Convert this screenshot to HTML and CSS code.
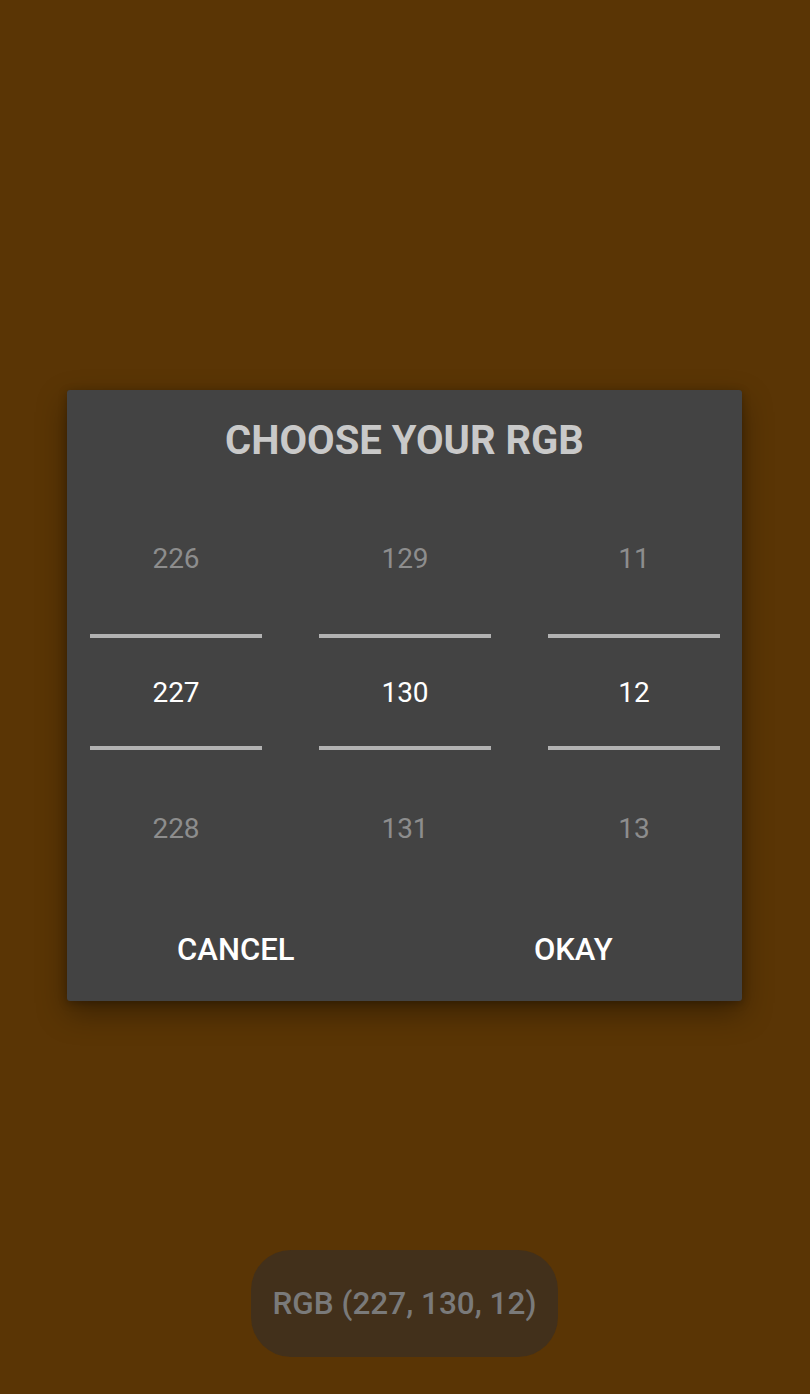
FILE: index.html
```html
<!DOCTYPE html>
<html>
<head>
<meta charset="utf-8">
<link rel="stylesheet" href="styles.css">
</head>
<body>
<div class="screen">
  <div class="dialog">
    <div class="title">CHOOSE YOUR RGB</div>
    <div class="pickers">
      <div class="picker">
        <div class="cell top">226</div>
        <div class="line"></div>
        <div class="cell mid">227</div>
        <div class="line"></div>
        <div class="cell bot">228</div>
      </div>
      <div class="picker">
        <div class="cell top">129</div>
        <div class="line"></div>
        <div class="cell mid">130</div>
        <div class="line"></div>
        <div class="cell bot">131</div>
      </div>
      <div class="picker">
        <div class="cell top">11</div>
        <div class="line"></div>
        <div class="cell mid">12</div>
        <div class="line"></div>
        <div class="cell bot">13</div>
      </div>
    </div>
    <div class="buttons">
      <div class="btn">CANCEL</div>
      <div class="btn">OKAY</div>
    </div>
  </div>
  <div class="toast">RGB (227, 130, 12)</div>
</div>
</body>
</html>
```
FILE: styles.css
```css
html, body {
  margin: 0;
  padding: 0;
}
body {
  background: #5a3505;
  font-family: Roboto, "Liberation Sans", sans-serif;
}
.screen {
  position: relative;
  width: 810px;
  height: 1394px;
  box-sizing: border-box;
  padding-top: 390px;
  padding-left: 67px;
  display: flex;
  flex-direction: column;
  align-items: flex-start;
}
.dialog {
  width: 675px;
  height: 611px;
  box-sizing: border-box;
  background: #434343;
  border-radius: 3px;
  box-shadow: 0 12px 30px rgba(0, 0, 0, 0.35), 0 2px 8px rgba(0, 0, 0, 0.25);
  padding-top: 26px;
  display: flex;
  flex-direction: column;
}
.title {
  height: 50px;
  line-height: 50px;
  text-align: center;
  font-size: 40px;
  font-weight: 700;
  color: #c9c9c9;
}
.pickers {
  margin-top: 16px;
  padding: 0 22px 0 23px;
  display: flex;
  gap: 57px;
}
.picker {
  width: 172px;
  display: flex;
  flex-direction: column;
}
.cell {
  display: flex;
  align-items: center;
  justify-content: center;
  font-size: 28px;
  color: #8d8d8d;
}
.cell.top { height: 152px; }
.cell.mid { height: 108px; color: #ffffff; }
.cell.bot { height: 156px; }
.line {
  height: 4px;
  background: #b2b2b2;
}
.buttons {
  display: flex;
  height: 86px;
}
.btn {
  flex: 1;
  display: flex;
  align-items: center;
  justify-content: center;
  font-size: 31px;
  font-weight: 500;
  color: #ffffff;
}
.toast {
  position: absolute;
  left: 251px;
  top: 1250px;
  width: 307px;
  height: 107px;
  border-radius: 40px;
  background: #42301b;
  color: #7a7a7a;
  font-size: 31.5px;
  font-weight: 500;
  display: flex;
  align-items: center;
  justify-content: center;
}
```
